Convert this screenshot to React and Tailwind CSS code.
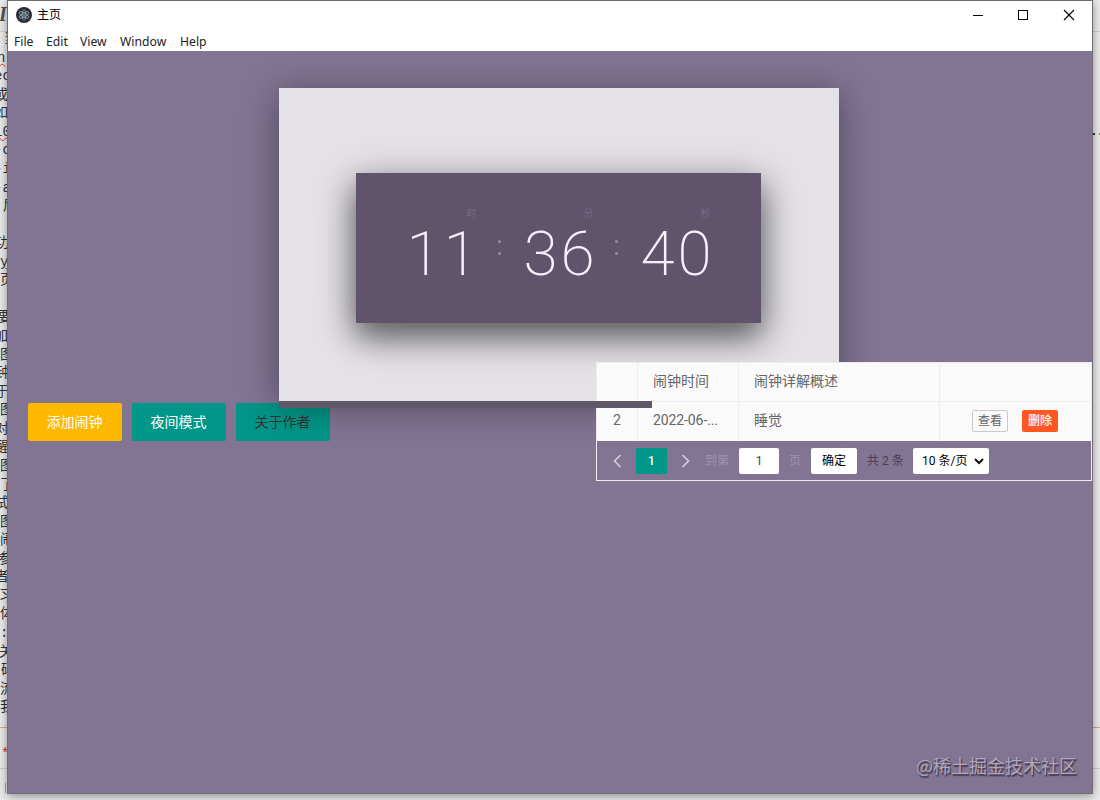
import React from 'react';

const editorLines = [
  ['当', 4], ['n', -3, 1], ['ec', -6], ['或', -6], ['如', -6], ['10', -6, 1], ['-c', -6],
  ['-i', -6], ['-a', -6], ['后', 3], ['', 0], ['功', -5], ['y', 0, 1], ['页', 0], ['', 0],
  ['要', -2], ['加', -6], ['图', 0], ['钟', -4], ['于', -5], ['图', 0], ['对', -5],
  ['醒', -5], ['图', 0], ['了', 0], ['试', -6], ['图', 0], ['闹', 0], ['参', -2],
  ['者', -5], ['习', -1], ['体', 0], [':', 0], ['关', -1], ['码', 1], ['流', 0], ['我', 0],
];

function ElectronIcon() {
  return (
    <svg className="h-4 w-4" viewBox="0 0 16 16" fill="none">
      <circle cx="8" cy="8" r="8" fill="#2b2e3a" />
      <g stroke="#9fb6bf" strokeWidth="0.7">
        <ellipse cx="8" cy="8" rx="5.3" ry="2" transform="rotate(30 8 8)" />
        <ellipse cx="8" cy="8" rx="5.3" ry="2" transform="rotate(90 8 8)" />
        <ellipse cx="8" cy="8" rx="5.3" ry="2" transform="rotate(150 8 8)" />
      </g>
      <circle cx="8" cy="8" r="0.8" fill="#b9cdd4" />
    </svg>
  );
}

function EditorBackdrop() {
  return (
    <div className="absolute inset-0 flex flex-col bg-[#ebebeb]">
      <div className="flex h-[32px] items-center overflow-hidden border-b border-[#cfcfcf]">
        <span className="-mt-1 -ml-px font-['Liberation_Serif',serif] text-[20px] font-bold italic text-[#555]">I</span>
      </div>
      <div className="-mt-[2px] h-[697px] font-['Liberation_Mono','Noto_Sans_CJK_SC',monospace] text-[14px] leading-[18.57px] text-[#333]">
        {editorLines.map(([text, x, misspelt], i) => (
          <div key={i} className="h-[18.57px] whitespace-nowrap">
            <span
              className={misspelt ? 'inline-block underline decoration-[#e03030] decoration-wavy decoration-1' : 'inline-block'}
              style={{ marginLeft: x }}
            >
              {text}
            </span>
          </div>
        ))}
      </div>
      <div className="h-px shrink-0 bg-[#d8ab80]" />
      <div className="flex h-[41px] items-center border-b border-[#cfcfcf] pl-[2px] text-[14px] text-[#c33] font-['Liberation_Mono',monospace]">
        <span className="-ml-px translate-y-1.5">*</span>
      </div>
      <div className="absolute top-[133px] right-0 flex h-[2px] w-[7px] justify-between">
        <span className="h-[2px] w-[2px] bg-[#333]" />
        <span className="h-[2px] w-[1px] bg-[#a65]" />
      </div>
      <div className="absolute top-[783px] left-[5px] h-[10px] w-[3px] border-l border-[#d9a53a]" />
    </div>
  );
}

function TitleBar() {
  return (
    <header className="flex h-[50px] flex-col bg-white text-black">
      <div className="flex h-[30px] items-center pl-2">
        <div className="-mt-[2px]"><ElectronIcon /></div>
        <span className="-mt-[4px] ml-[5px] font-['Noto_Sans_CJK_SC',sans-serif] text-[12px] leading-4">主页</span>
        <div className="ml-auto flex h-full items-center">
          <svg className="h-[30px] w-[138px]" viewBox="0 0 138 30" fill="none" stroke="#000" shapeRendering="crispEdges">
            <path d="M19 14.5h10" />
            <rect x="64.5" y="9.5" width="9" height="9" />
            <path d="M110 9l10 10M120 9l-10 10" strokeWidth="1.1" shapeRendering="auto" />
          </svg>
        </div>
      </div>
      <nav className="flex h-5 items-center gap-[12px] pt-[2px] pl-[6px] font-['Noto_Sans',sans-serif] text-[12.2px] leading-5 text-[#222]">
        <span className="w-5">File</span>
        <span className="w-[22px]">Edit</span>
        <span className="w-7">View</span>
        <span className="w-12">Window</span>
        <span>Help</span>
      </nav>
    </header>
  );
}

function TimeUnit({ label, value }) {
  return (
    <div className="flex w-[78px] flex-col">
      <span className="h-[13px] pr-[8px] text-right font-['Noto_Sans_CJK_SC',sans-serif] text-[10px] font-light leading-[13px] text-[#827592]">
        {label}
      </span>
      <span className="mt-[3px] whitespace-nowrap font-['Roboto',sans-serif] text-[62px] font-extralight leading-[64px] tracking-[3.1px] text-[#f8effc]">
        {value}
      </span>
    </div>
  );
}

function Colon() {
  return (
    <div className="mt-[34px] flex w-[39px] flex-col items-center gap-[9px] pr-[9px]">
      <i className="h-[3px] w-[3px] rounded-full bg-[#9a8ca6]" />
      <i className="h-[3px] w-[3px] rounded-full bg-[#9a8ca6]" />
    </div>
  );
}

function Clock() {
  return (
    <section className="relative z-10 ml-[271px] h-[313px] w-[560px] bg-[#e4e1e7] pt-[85px] pl-[77.4px] shadow-[0_5px_35px_rgba(0,0,0,0.4)]">
      <div className="flex h-[150px] w-[405px] bg-[#60536c] pt-[33px] pl-[50px] shadow-[0_14px_28px_rgba(0,0,0,0.45),0_10px_40px_rgba(0,0,0,0.3)]">
        <TimeUnit label="时" value="11" />
        <Colon />
        <TimeUnit label="分" value="36" />
        <Colon />
        <TimeUnit label="秒" value="40" />
      </div>
    </section>
  );
}

function AlarmTable() {
  return (
    <div className="relative z-20 -mt-[41px] ml-auto flex h-[119px] w-[496px] flex-col border border-[#eeeeee] text-[14px] text-[#666] font-['Roboto','Noto_Sans_CJK_SC',sans-serif]">
      <div className="grid h-[39px] grid-cols-[41px_101px_201px_1fr] border-b border-[#eeeeee] bg-[#fafafa] leading-[36px]">
        <div className="border-r border-[#eeeeee]" />
        <div className="border-r border-[#eeeeee] pl-[15px]">闹钟时间</div>
        <div className="border-r border-[#eeeeee] pl-[15px]">闹钟详解概述</div>
        <div />
      </div>
      <div className="grid h-[39px] grid-cols-[41px_101px_201px_1fr] bg-[#fafafa] leading-[37px]">
        <div className="border-r border-[#eeeeee] text-center">2</div>
        <div className="border-r border-[#eeeeee] pl-[15px] tracking-[-0.1px]">2022-06-...</div>
        <div className="border-r border-[#eeeeee] pl-[15px]">睡觉</div>
        <div className="-mt-[2px] flex items-center gap-[14px] pl-8 text-[12px]">
          <button className="h-[22px] w-9 rounded-[2px] border border-[#c9c9c9] leading-[20px]">查看</button>
          <button className="h-[22px] w-9 rounded-[2px] bg-[#ff5722] font-medium leading-[22px] text-white">删除</button>
        </div>
      </div>
      <div className="flex h-[39px] items-center pl-[15px] text-[12px] text-[#333]">
        <svg className="h-4 w-3" viewBox="0 0 12 16" fill="none" stroke="#d5cedc" strokeWidth="1.6">
          <path d="M8.5 2L2.5 8l6 6" />
        </svg>
        <span className="ml-3 flex h-[26px] w-[31px] items-center justify-center rounded-[1px] bg-[#009688] font-medium text-white">1</span>
        <svg className="ml-3 h-4 w-3" viewBox="0 0 12 16" fill="none" stroke="#d5cedc" strokeWidth="1.6">
          <path d="M3.5 2l6 6-6 6" />
        </svg>
        <span className="ml-[14px] text-[#9d93a9]">到第</span>
        <span className="ml-[10px] flex h-[26px] w-10 items-center justify-center rounded-[2px] bg-white text-[#444]">1</span>
        <span className="ml-[10px] text-[#9d93a9]">页</span>
        <button className="ml-[10px] h-[26px] w-[46px] rounded-[2px] bg-white text-black">确定</button>
        <span className="ml-[10px] w-9 whitespace-nowrap text-[#493e53]">共 2 条</span>
        <span className="ml-[10px] flex h-[26px] w-[76px] items-center rounded-[2px] bg-white pl-[9px] text-black">
          <span className="w-[47px] whitespace-nowrap">10 条/页</span>
          <svg className="ml-[5px] h-[10px] w-[10px]" viewBox="0 0 10 10" fill="none" stroke="#111" strokeWidth="2">
            <path d="M1 3l4 4 4-4" />
          </svg>
        </span>
      </div>
    </div>
  );
}

export default function App() {
  return (
    <div className="relative h-[800px] w-[1100px] overflow-hidden">
      <EditorBackdrop />
      <div className="absolute top-0 left-[7px] flex h-[794px] w-[1086px] flex-col border border-[#706b76] bg-[#827594] shadow-[0_2px_9px_rgba(0,0,0,0.4)]">
        <TitleBar />
        <main className="flex flex-1 flex-col overflow-hidden pt-[37px]">
          <div className="relative">
            <Clock />
            <div className="absolute top-full left-[271px] z-30 h-[7px] w-[373px] bg-[#605768]" />
          </div>
          <div className="flex items-start pt-[2px] pl-5">
            <div className="flex gap-[10px] text-[14px] leading-[36px] text-white font-['Noto_Sans_CJK_SC',sans-serif]">
              <button className="h-[38px] w-[94px] rounded-[2px] bg-[#ffb800] pr-px pb-[2px]">添加闹钟</button>
              <button className="h-[38px] w-[94px] rounded-[2px] bg-[#009688] pr-px pb-[2px]">夜间模式</button>
              <button className="h-[38px] w-[94px] rounded-[2px] bg-[#009688] pr-px pb-[2px] text-[#333]">关于作者</button>
            </div>
            <AlarmTable />
          </div>
          <div className="mt-auto mr-[15px] mb-[15px] self-end font-['Noto_Sans_CJK_SC',sans-serif] text-[18px] leading-[26px] text-[#b0a7bb] [text-shadow:1px_1px_1px_#4b3f58,1px_2px_1px_#4b3f58]">
            @稀土掘金技术社区
          </div>
        </main>
      </div>
    </div>
  );
}
